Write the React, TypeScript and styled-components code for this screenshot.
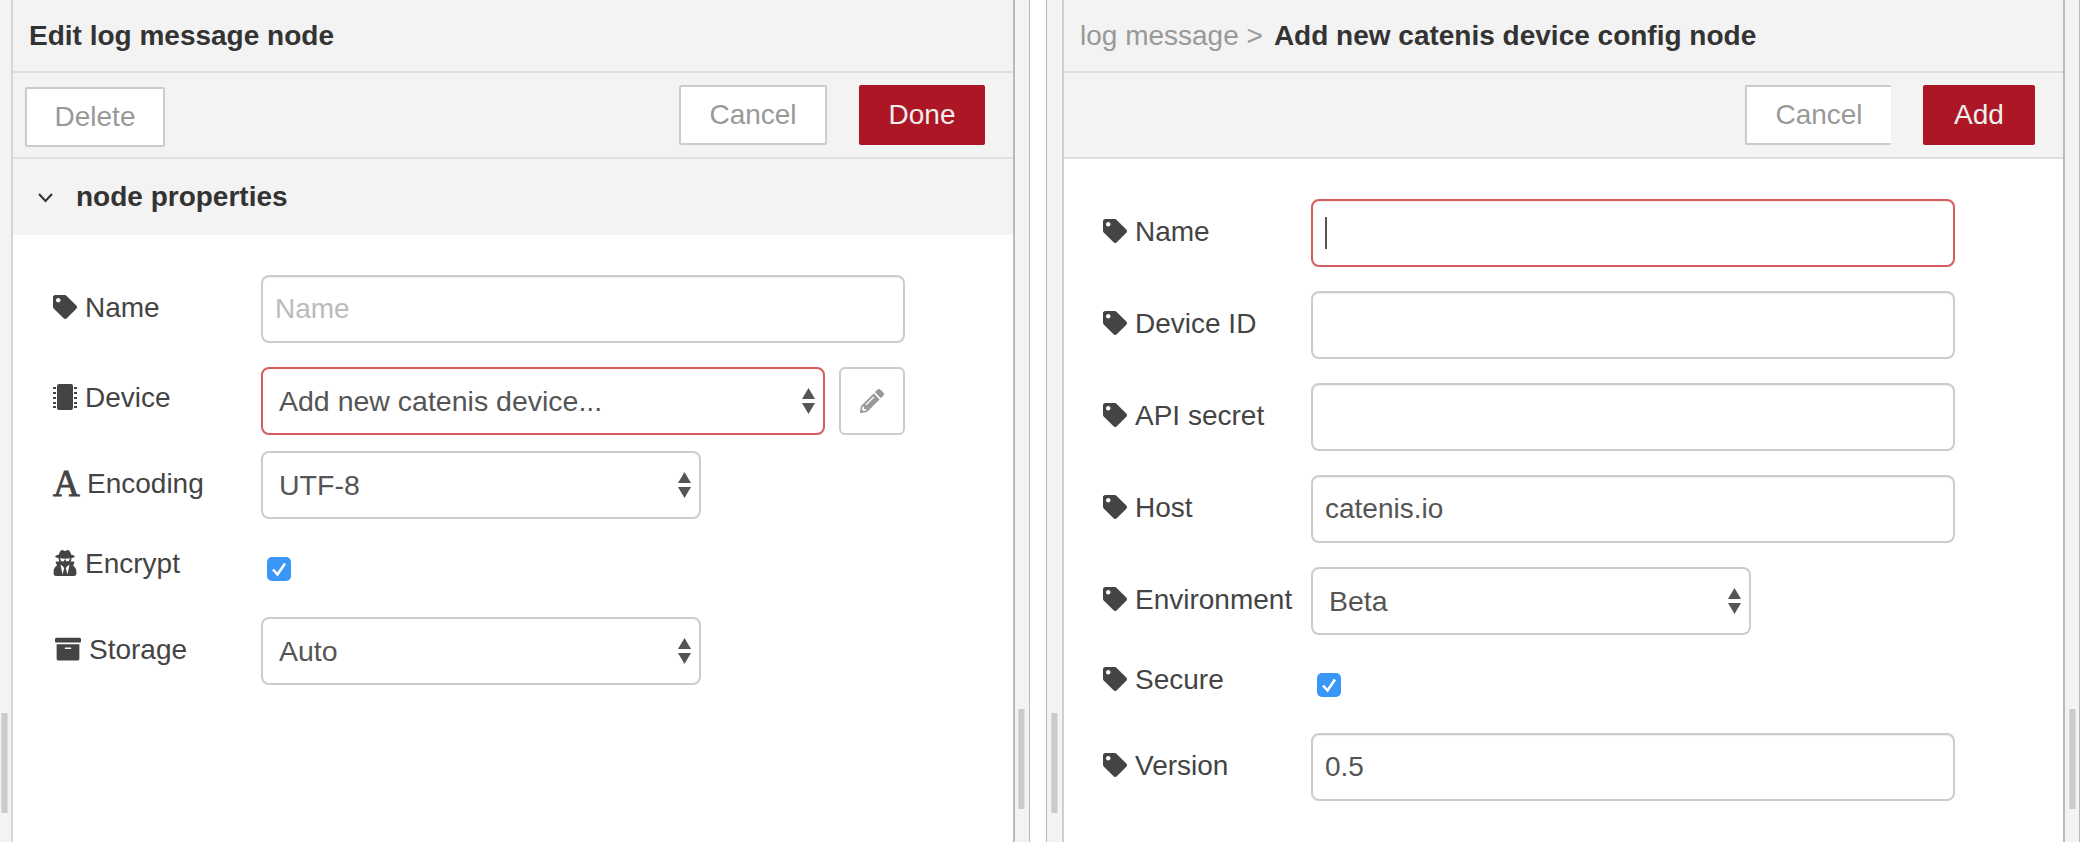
import React from 'react'
import styled, { createGlobalStyle } from 'styled-components'
import { FaArchive, FaPencilAlt, FaTag, FaUserSecret } from 'react-icons/fa'

const GlobalStyle = createGlobalStyle`
    html, body {
        margin: 0;
        padding: 0;
        background: #fff;
    }
    body {
        font-family: "Liberation Sans", Arial, sans-serif;
    }
`

const ChipIcon = () => (
  <svg width="24" height="26" viewBox="0 0 24 26" fill="#444">
    <rect x="4" y="0" width="16" height="26" rx="2" />
    {[3, 8, 13, 18, 22].map((y) => (
      <React.Fragment key={y}>
        <rect x="0" y={y} width="3" height="2" />
        <rect x="21" y={y} width="3" height="2" />
      </React.Fragment>
    ))}
  </svg>
)

const SelectArrows = () => (
  <svg width="13" height="26" viewBox="0 0 13 26" fill="#555">
    <polygon points="6.5,0 13,11 0,11" />
    <polygon points="0,15 13,15 6.5,26" />
  </svg>
)

const Chevron = () => (
  <svg width="15" height="11" viewBox="0 0 15 11" fill="none" stroke="#333" strokeWidth="2">
    <polyline points="1,2 7.5,9 14,2" />
  </svg>
)

const CheckMark = () => (
  <svg width="24" height="24" viewBox="0 0 24 24" fill="none" stroke="#fff" strokeWidth="2.6">
    <polyline points="6,12.5 10.5,17.5 18,6.5" />
  </svg>
)

const TagLabel = ({ text, top }: { text: string; top?: number }) => (
  <Label $top={top}>
    <FaTag size={24} />
    {text}
  </Label>
)

const Select = ({ text, width, invalid }: { text: string; width: number; invalid?: boolean }) => (
  <SelectBox $width={width} $invalid={invalid}>
    {text}
    <SelectArrows />
  </SelectBox>
)

const App = () => {
  return (
    <Page>
      <GlobalStyle />
      <Gutter $width={11} $thumbLeft={1} $thumbTop={713} $divider="right">
        <Thumb />
      </Gutter>
      <Panel $width={1000}>
        <Header>
          <Title>Edit log message node</Title>
        </Header>
        <Toolbar>
          <Button $width={140} $drop={2}>Delete</Button>
          <Actions>
            <Button $width={148}>Cancel</Button>
            <PrimaryButton $width={126}>Done</PrimaryButton>
          </Actions>
        </Toolbar>
        <SectionHeader>
          <Chevron />
          <SectionTitle>node properties</SectionTitle>
        </SectionHeader>
        <Form $inset={40}>
          <Row>
            <TagLabel text="Name" />
            <Field $width={644} $placeholder>Name</Field>
          </Row>
          <Row $gap={24}>
            <Label $top={11}>
              <ChipIcon />
              Device
            </Label>
            <Select text="Add new catenis device..." width={564} invalid />
            <EditButton>
              <FaPencilAlt size={24} />
            </EditButton>
          </Row>
          <Row $gap={16}>
            <Label>
              <SerifIcon aria-hidden>A</SerifIcon>
              Encoding
            </Label>
            <Select text="UTF-8" width={440} />
          </Row>
          <Row $gap={12}>
            <Label>
              <SecretIcon size={26} />
              Encrypt
            </Label>
            <Checkbox>
              <CheckMark />
            </Checkbox>
          </Row>
          <Row $gap={33}>
            <Label>
              <StorageIcon size={26} />
              Storage
            </Label>
            <Select text="Auto" width={440} />
          </Row>
        </Form>
      </Panel>
      <Gutter $width={14} $thumbLeft={3} $thumbTop={709} $divider="both">
        <Thumb />
      </Gutter>
      <Divider />
      <Gutter $width={15} $thumbLeft={4} $thumbTop={713} $divider="trailing">
        <Thumb />
      </Gutter>
      <Panel $width={999}>
        <Header>
          <Crumb>log message &gt;</Crumb>
          <Title>Add new catenis device config node</Title>
        </Header>
        <Toolbar>
          <span />
          <Actions>
            <Button $width={146} $clipped>Cancel</Button>
            <PrimaryButton $width={112}>Add</PrimaryButton>
          </Actions>
        </Toolbar>
        <Form $inset={39}>
          <Row>
            <TagLabel text="Name" />
            <Field $width={644} $invalid>
              <Caret />
            </Field>
          </Row>
          <Row $gap={24}>
            <TagLabel text="Device ID" />
            <Field $width={644} />
          </Row>
          <Row $gap={24}>
            <TagLabel text="API secret" />
            <Field $width={644} />
          </Row>
          <Row $gap={24}>
            <TagLabel text="Host" />
            <Field $width={644}>catenis.io</Field>
          </Row>
          <Row $gap={24}>
            <TagLabel text="Environment" />
            <Select text="Beta" width={440} />
          </Row>
          <Row $gap={12}>
            <TagLabel text="Secure" />
            <Checkbox>
              <CheckMark />
            </Checkbox>
          </Row>
          <Row $gap={33}>
            <TagLabel text="Version" />
            <Field $width={644}>0.5</Field>
          </Row>
        </Form>
      </Panel>
      <Gutter $width={14} $thumbLeft={4} $thumbTop={709} $divider="end">
        <Thumb />
      </Gutter>
    </Page>
  )
}

export default App

const Page = styled.div`
    width: 2080px;
    height: 842px;
    display: flex;
    overflow: hidden;
    background-color: #fff;
`
const dividerStyles: Record<string, string> = {
  right: 'border-right: 2px solid #d6d6d6;',
  both: 'border-left: 2px solid #bababa; border-right: 1px solid #b8b8b8;',
  trailing: 'border-left: 1px solid #b8b8b8; border-right: 2px solid #cfcfcf;',
  end: 'border-left: 2px solid #bababa; border-right: 1px solid #b8b8b8;',
}
const Gutter = styled.div<{ $width: number; $thumbLeft: number; $thumbTop: number; $divider: string }>`
    flex: none;
    width: ${(p) => p.$width}px;
    height: 100%;
    box-sizing: content-box;
    padding: ${(p) => p.$thumbTop}px 0 0 0;
    background-color: #f3f3f3;
    ${(p) => dividerStyles[p.$divider]}
    > div {
        margin-left: ${(p) => p.$thumbLeft}px;
    }
`
const Thumb = styled.div`
    width: 7px;
    height: 100px;
    box-sizing: border-box;
    background-color: #cbcbcb;
    border-left: 1px solid #d8d8d8;
    border-right: 1px solid #dedede;
`
const Divider = styled.div`
    flex: none;
    width: 16px;
    background-color: #fff;
`
const Panel = styled.div<{ $width: number }>`
    flex: none;
    width: ${(p) => p.$width}px;
    display: flex;
    flex-direction: column;
    background-color: #fff;
`
const Header = styled.div`
    height: 73px;
    box-sizing: border-box;
    display: flex;
    align-items: center;
    gap: 11px;
    padding: 0 0 0 16px;
    background-color: #f3f3f3;
    border-bottom: 2px solid #dedede;
`
const Title = styled.div`
    font-size: 28px;
    font-weight: 700;
    color: #333;
    white-space: nowrap;
`
const Crumb = styled.div`
    font-size: 28px;
    color: #999;
    white-space: nowrap;
`
const Toolbar = styled.div`
    height: 86px;
    box-sizing: border-box;
    display: flex;
    align-items: flex-start;
    justify-content: space-between;
    padding: 12px 28px 0 12px;
    background-color: #f3f3f3;
    border-bottom: 2px solid #dedede;
`
const Actions = styled.div`
    display: flex;
    gap: 32px;
`
const Button = styled.div<{ $width: number; $drop?: number; $clipped?: boolean }>`
    width: ${(p) => p.$width}px;
    height: 60px;
    box-sizing: border-box;
    margin-top: ${(p) => p.$drop ?? 0}px;
    display: flex;
    align-items: center;
    justify-content: center;
    font-size: 28px;
    color: #999;
    background-color: #fff;
    border: 2px solid #ccc;
    border-right: ${(p) => (p.$clipped ? 'none' : '2px solid #ccc')};
    border-radius: 2px;
`
const PrimaryButton = styled.div<{ $width: number }>`
    width: ${(p) => p.$width}px;
    height: 60px;
    display: flex;
    align-items: center;
    justify-content: center;
    font-size: 28px;
    color: #eee;
    background-color: #ad1625;
    border-radius: 2px;
`
const SectionHeader = styled.div`
    height: 76px;
    box-sizing: border-box;
    display: flex;
    align-items: center;
    gap: 23px;
    padding-left: 25px;
    background-color: #f3f3f3;
`
const SectionTitle = styled.div`
    font-size: 28px;
    font-weight: 700;
    color: #333;
`
const Form = styled.div<{ $inset: number }>`
    display: flex;
    flex-direction: column;
    padding: 40px 0 0 ${(p) => p.$inset}px;
`
const Row = styled.div<{ $gap?: number }>`
    display: flex;
    align-items: flex-start;
    margin-top: ${(p) => p.$gap ?? 0}px;
`
const Label = styled.label<{ $top?: number }>`
    flex: none;
    width: 208px;
    height: 40px;
    margin-top: ${(p) => p.$top ?? 13}px;
    display: flex;
    align-items: center;
    gap: 8px;
    font-size: 28px;
    line-height: 40px;
    color: #444;
    white-space: nowrap;
    svg {
        flex: none;
        margin-top: -2px;
    }
`
const SerifIcon = styled.span`
    width: 26px;
    font-family: "Liberation Serif", "Times New Roman", serif;
    font-size: 37px;
    line-height: 40px;
    color: #444;
    -webkit-text-stroke: 0.9px #444;
`
const SecretIcon = styled(FaUserSecret)`
    width: 24px;
`
const StorageIcon = styled(FaArchive)`
    margin-left: 2px;
`
const Field = styled.div<{ $width: number; $placeholder?: boolean; $invalid?: boolean }>`
    flex: none;
    width: ${(p) => p.$width}px;
    height: 68px;
    box-sizing: border-box;
    display: flex;
    align-items: center;
    padding: 0 12px;
    font-size: 28px;
    color: ${(p) => (p.$placeholder ? '#bbb' : '#555')};
    background-color: #fff;
    border: 2px solid ${(p) => (p.$invalid ? '#d65c5c' : '#ccc')};
    border-radius: 8px;
    box-shadow: inset 0 1px 1px rgba(0, 0, 0, 0.075);
`
const SelectBox = styled.div<{ $width: number; $invalid?: boolean }>`
    flex: none;
    width: ${(p) => p.$width}px;
    height: 68px;
    box-sizing: border-box;
    display: flex;
    align-items: center;
    justify-content: space-between;
    padding: 0 8px 0 16px;
    font-size: 28.5px;
    color: #555;
    background-color: #fff;
    border: 2px solid ${(p) => (p.$invalid ? '#d65c5c' : '#ccc')};
    border-radius: 8px;
`
const EditButton = styled.div`
    flex: none;
    width: 66px;
    height: 68px;
    box-sizing: border-box;
    margin-left: 14px;
    display: flex;
    align-items: center;
    justify-content: center;
    color: #999;
    background-color: #fff;
    border: 2px solid #ccc;
    border-radius: 6px;
`
const Caret = styled.span`
    width: 2px;
    height: 32px;
    background-color: #555;
`
const Checkbox = styled.div`
    flex: none;
    width: 24px;
    height: 24px;
    margin: 26px 0 0 6px;
    background-color: #3a96f7;
    border-radius: 5px;
`
